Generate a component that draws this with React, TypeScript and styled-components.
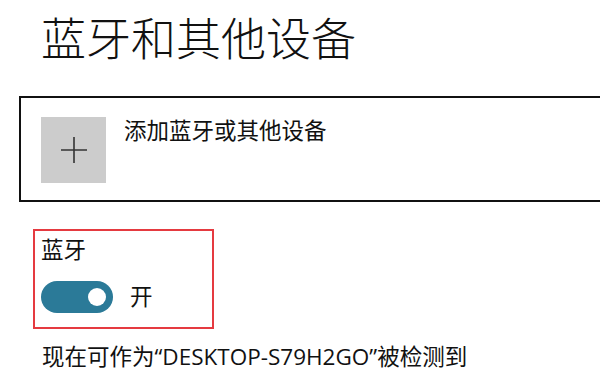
import React from "react";
import styled, { createGlobalStyle } from "styled-components";

const GlobalStyle = createGlobalStyle`
  html, body {
    margin: 0;
    padding: 0;
    background: #ffffff;
  }
  body {
    width: 600px;
    height: 383px;
    overflow: hidden;
    font-family: "Open Sans", "Noto Sans CJK SC", sans-serif;
    color: #111111;
  }
`;

const Page = styled.div`
  display: flex;
  flex-direction: column;
  align-items: flex-start;
`;

const Title = styled.h1`
  margin: 12px 0 0 41px;
  font-size: 45px;
  line-height: 54px;
  font-weight: 300;
  color: #111111;
`;

const AddCard = styled.div`
  box-sizing: border-box;
  margin: 30px 0 0 19px;
  width: 583px;
  height: 106px;
  border: 2px solid #111111;
  border-right: none;
  padding: 19px 20px 0 20px;
  display: flex;
  align-items: flex-start;
  gap: 18px;
`;

const PlusTile = styled.div`
  width: 65px;
  height: 66px;
  background: #cccccc;
  display: flex;
  align-items: center;
  justify-content: center;
  flex-shrink: 0;
`;

const AddLabel = styled.span`
  font-size: 22.5px;
  line-height: 28px;
  color: #111111;
`;

const Highlight = styled.div`
  box-sizing: border-box;
  margin: 27px 0 0 33px;
  width: 181px;
  border: 2px solid #e53a40;
  padding: 5px 6px 14px 6px;
  display: flex;
  flex-direction: column;
`;

const Label = styled.div`
  font-size: 22.5px;
  line-height: 28px;
  color: #111111;
`;

const ToggleRow = styled.div`
  display: flex;
  align-items: center;
  gap: 17px;
  margin-top: 17px;
`;

const Track = styled.div<{ $on: boolean }>`
  position: relative;
  width: 72px;
  height: 32px;
  border-radius: 16px;
  background: ${(p) => (p.$on ? "#2b7a98" : "#ffffff")};
  flex-shrink: 0;
`;

const Knob = styled.div<{ $on: boolean }>`
  position: absolute;
  top: 7px;
  ${(p) => (p.$on ? "right: 7px;" : "left: 7px;")}
  width: 18px;
  height: 18px;
  border-radius: 50%;
  background: #ffffff;
`;

const StateText = styled.span`
  font-size: 22.5px;
  line-height: 28px;
  color: #111111;
`;

const Status = styled.div`
  margin: 14px 0 0 42px;
  font-size: 22.5px;
  line-height: 28px;
  color: #111111;
  white-space: nowrap;
`;

export default function App() {
  const on = true;
  return (
    <>
      <GlobalStyle />
      <Page>
        <Title>蓝牙和其他设备</Title>
        <AddCard>
          <PlusTile>
            <svg width="28" height="28" viewBox="0 0 28 28">
              <path d="M14 1v26M1 14h26" stroke="#333333" strokeWidth="1.6" fill="none" />
            </svg>
          </PlusTile>
          <AddLabel>添加蓝牙或其他设备</AddLabel>
        </AddCard>
        <Highlight>
          <Label>蓝牙</Label>
          <ToggleRow>
            <Track $on={on}>
              <Knob $on={on} />
            </Track>
            <StateText>开</StateText>
          </ToggleRow>
        </Highlight>
        <Status>现在可作为“DESKTOP-S79H2GO”被检测到</Status>
      </Page>
    </>
  );
}
